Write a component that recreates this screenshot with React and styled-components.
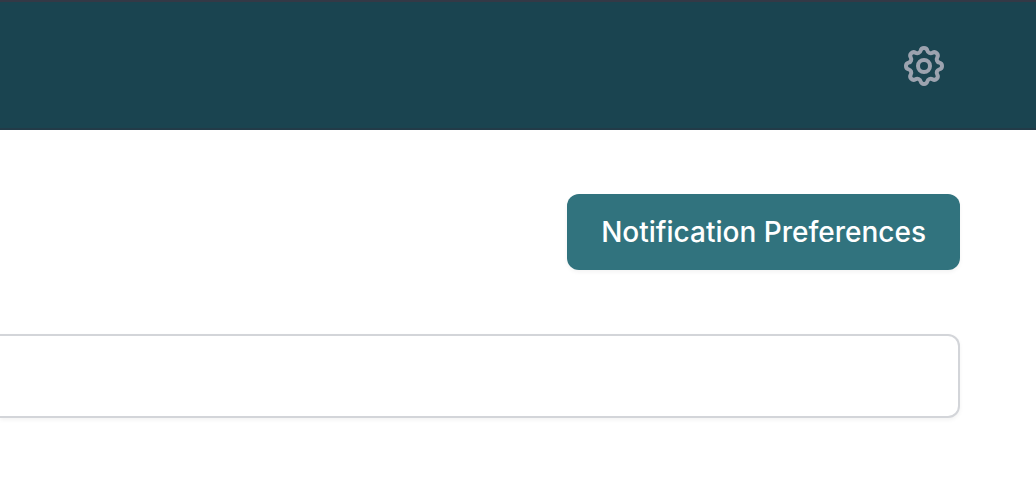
import React from "react";
import styled, { createGlobalStyle } from "styled-components";

const GlobalStyle = createGlobalStyle`
  *, *::before, *::after {
    box-sizing: border-box;
  }
  body {
    margin: 0;
    background: #ffffff;
    font-family: Inter, "Liberation Sans", sans-serif;
  }
`;

const Header = styled.header`
  display: flex;
  align-items: center;
  justify-content: flex-end;
  padding: 40px 88px 38px 0;
  background: #1a4450;
  border-top: 2px solid #343946;
  border-bottom: 2px solid #223b48;
`;

const IconButton = styled.button`
  display: flex;
  padding: 0;
  border: 0;
  background: transparent;
  color: #9ca3af;
  cursor: pointer;
`;

const GearIcon = styled.svg`
  width: 48px;
  height: 48px;
  fill: none;
  stroke: currentColor;
  stroke-width: 2;
  stroke-linecap: round;
  stroke-linejoin: round;
`;

const Main = styled.main`
  display: flex;
  flex-direction: column;
  gap: 64px;
  padding: 64px 76px 60px 0;
`;

const Actions = styled.div`
  display: flex;
  justify-content: flex-end;
`;

const PrimaryButton = styled.button`
  padding: 18px 34px;
  border: 0;
  border-radius: 12px;
  background: #31737e;
  color: #ffffff;
  box-shadow: 0 2px 4px rgba(0, 0, 0, 0.05);
  font-family: inherit;
  font-size: 28px;
  font-weight: 500;
  line-height: 40px;
  white-space: nowrap;
  cursor: pointer;
`;

const TextField = styled.input`
  width: 100%;
  padding: 20px 24px;
  border: 2px solid #d3d5d9;
  border-left: 0;
  border-radius: 0 12px 12px 0;
  background: #ffffff;
  color: #111827;
  box-shadow: 0 2px 4px rgba(0, 0, 0, 0.05);
  font-family: inherit;
  font-size: 28px;
  line-height: 40px;
`;

export default function App() {
  return (
    <>
      <GlobalStyle />
      <Header>
        <IconButton type="button" aria-label="Settings">
          <GearIcon viewBox="0 0 24 24" aria-hidden="true">
            <path d="M10.325 4.317c.426-1.756 2.924-1.756 3.35 0a1.724 1.724 0 002.573 1.066c1.543-.94 3.31.826 2.37 2.37a1.724 1.724 0 001.065 2.572c1.756.426 1.756 2.924 0 3.35a1.724 1.724 0 00-1.066 2.573c.94 1.543-.826 3.31-2.37 2.37a1.724 1.724 0 00-2.572 1.065c-.426 1.756-2.924 1.756-3.35 0a1.724 1.724 0 00-2.573-1.066c-1.543.94-3.31-.826-2.37-2.37a1.724 1.724 0 00-1.065-2.572c-1.756-.426-1.756-2.924 0-3.35a1.724 1.724 0 001.066-2.573c-.94-1.543.826-3.31 2.37-2.37.996.608 2.296.07 2.572-1.065z" />
            <path d="M15 12a3 3 0 11-6 0 3 3 0 016 0z" />
          </GearIcon>
        </IconButton>
      </Header>
      <Main>
        <Actions>
          <PrimaryButton type="button">Notification Preferences</PrimaryButton>
        </Actions>
        <TextField type="text" aria-label="Search" />
      </Main>
    </>
  );
}
